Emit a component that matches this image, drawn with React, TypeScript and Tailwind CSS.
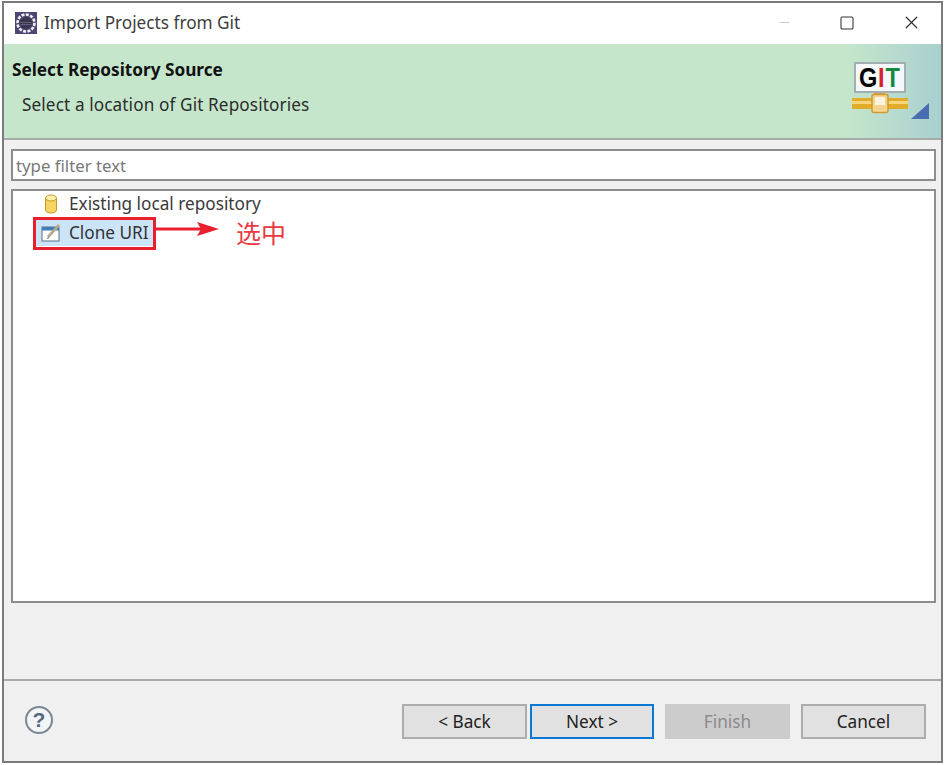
import { Minus, Square, X } from "lucide-react";

const FONT = "font-['Noto_Sans','Liberation_Sans',sans-serif]";

function EclipseIcon() {
  return (
    <svg width="22" height="22" viewBox="0 0 22 22" className="shrink-0">
      <rect x="0" y="0" width="22" height="22" fill="#4f4574" />
      <circle cx="11" cy="11" r="8.5" fill="none" stroke="#f2f2f4" strokeWidth="2.6" strokeDasharray="3 1.4" />
      <circle cx="11" cy="11" r="6" fill="#39374f" />
      <path d="M5.5 10.5h11M5.8 12.5h10.4" stroke="#6c6a85" strokeWidth="0.8" />
    </svg>
  );
}

function GitLogo() {
  return (
    <div className="flex flex-col items-center w-[56px]">
      <div className="w-[52px] h-[31px] bg-[#f4f8fa] border-2 border-[#a3adb3] flex items-center justify-center font-['Liberation_Sans',sans-serif] font-bold text-[28px] leading-none">
        <div className="flex scale-x-[0.84] tracking-[1px]">
          <span className="text-black">G</span>
          <span className="text-[#d8232a]">I</span>
          <span className="text-[#14893f]">T</span>
        </div>
      </div>
      <svg width="56" height="21" viewBox="0 0 56 21">
        <rect x="0" y="5" width="56" height="11" fill="#e2ac2b" />
        <rect x="0" y="8" width="56" height="3" fill="#f6d67a" />
        <rect x="22" y="0" width="11" height="3" fill="#d9a43a" />
        <rect x="20" y="1.5" width="16" height="18" rx="2" fill="#f3d58d" stroke="#cf9a30" strokeWidth="1.5" />
        <rect x="23" y="4" width="10" height="8" fill="#fbf3df" />
      </svg>
    </div>
  );
}

function CylinderIcon() {
  return (
    <svg width="14" height="20" viewBox="0 0 14 20" className="shrink-0">
      <path d="M1.5 4v12c0 4 11 4 11 0V4z" fill="#f5d560" stroke="#c79a2e" />
      <ellipse cx="7" cy="4" rx="5.5" ry="3" fill="#fbeea8" stroke="#c79a2e" />
    </svg>
  );
}

function CloneIcon() {
  return (
    <svg width="21" height="19" viewBox="0 0 21 19" className="shrink-0">
      <rect x="1" y="4" width="17" height="14" fill="#fdfdfd" stroke="#5b7183" />
      <rect x="1" y="4" width="17" height="3.5" fill="#3f7fb5" />
      <path d="M7 14L18 2" stroke="#b3a88c" strokeWidth="2.6" />
      <path d="M7 14l-1 2 2-1z" fill="#444" />
    </svg>
  );
}

function WizardButton({ label, className }: { label: string; className: string }) {
  return (
    <button className={`h-[35px] pt-[1px] text-[17.2px] leading-none flex items-center justify-center ${className}`}>
      {label}
    </button>
  );
}

export default function App() {
  return (
    <div className={`relative w-[945px] h-[765px] bg-white pt-[1px] pl-[2px] overflow-hidden ${FONT}`}>
      <div className="flex flex-col h-[762px] w-[941px] border-2 border-[#7b7b7b] bg-[#f0f0f0]">
        {/* title bar */}
        <div className="flex items-center h-[41px] bg-white shrink-0 pl-[11px] pb-[2px]">
          <EclipseIcon />
          <span className="ml-[7px] text-[17.2px] text-[#3c3c3c]">Import Projects from Git</span>
          <div className="ml-auto flex items-center text-[#333]">
            <Minus className="w-[15px] h-[15px] text-[#b5b5b5] mr-[47px]" strokeWidth={1.2} />
            <Square className="w-[16px] h-[16px] mr-[46px]" strokeWidth={1.6} absoluteStrokeWidth />
            <X className="w-[21px] h-[21px] mr-[19px]" strokeWidth={1.5} absoluteStrokeWidth />
          </div>
        </div>

        {/* banner */}
        <div className="relative flex h-[96px] shrink-0 bg-[linear-gradient(90deg,#c5e6cb_0%,#c5e6cb_90%,#a9d0d0_100%)] border-b-2 border-[#a8aca9]">
          <div className="flex-1 pl-[8px] pt-[14px]">
            <div className="text-[17.2px] font-bold text-[#111] leading-[24px]">Select Repository Source</div>
            <div className="text-[17.2px] text-[#2c2c2c] leading-[24px] tracking-[0.1px] pl-[10px] mt-[11px]">Select a location of Git Repositories</div>
          </div>
          <div className="pt-[18px] pr-[33px] flex">
            <GitLogo />
          </div>
          <svg width="18" height="16" viewBox="0 0 18 16" className="absolute right-[12px] bottom-[19px]">
            <path d="M0 16L18 0v16z" fill="#4a6cb0" />
          </svg>
        </div>

        {/* filter + tree */}
        <div className="flex-1 flex flex-col pl-[7px] pr-[5px] pt-[9px] pb-[76px] gap-[8px] border-b-2 border-[#a9a9a9] min-h-0">
          <div className="h-[32px] shrink-0 bg-white border-2 border-[#8d8d8d] flex items-center pl-[3px] pt-[2px] text-[16.8px] text-[#7a7a7a]">
            type filter text
          </div>
          <div className="flex-1 bg-white border-2 border-[#8d8d8d] relative">
            <div className="flex items-center h-[26px] pl-[31px] gap-[11px] text-[17.2px] text-[#3a3a3a]">
              <CylinderIcon />
              <span>Existing local repository</span>
            </div>
            <div className="flex items-center h-[27px] mt-[2px] ml-[22px] w-[120px] pl-[6px] gap-[7px] bg-[#cce4f7] text-[17.2px] text-[#333]">
              <CloneIcon />
              <span>Clone URI</span>
            </div>
          </div>
        </div>

        {/* footer */}
        <div className="h-[80px] shrink-0 flex items-start pt-[23px] pl-[20px] pr-[15px]">
          <svg width="30" height="30" viewBox="0 0 30 30" className="shrink-0 mt-[1px]">
            <circle cx="15" cy="15" r="13" fill="#f3f4f6" stroke="#7a8794" strokeWidth="2" />
            <text x="15" y="22" textAnchor="middle" fontSize="21" fontWeight="700" fill="#56687f" fontFamily="Liberation Sans">?</text>
          </svg>
          <div className="ml-auto flex items-center">
            <WizardButton label="< Back" className="w-[125px] bg-[#e1e1e1] border-2 border-[#adadad] text-[#222]" />
            <WizardButton label="Next >" className="w-[124px] ml-[3px] bg-[#e1e1e1] border-2 border-[#0a78d4] text-[#222]" />
            <WizardButton label="Finish" className="w-[125px] ml-[11px] bg-[#cccccc] text-[#8a8a8a]" />
            <WizardButton label="Cancel" className="w-[125px] ml-[11px] bg-[#e1e1e1] border-2 border-[#adadad] text-[#222]" />
          </div>
        </div>
      </div>

      {/* red annotation over the selected row */}
      <div className="absolute left-[33px] top-[217px] w-[123px] h-[33px] border-[3px] border-[#e8202e]" />
      <svg width="66" height="20" viewBox="0 0 66 20" className="absolute left-[155px] top-[219px]">
        <path d="M0 10H46" stroke="#e8202e" strokeWidth="3" />
        <path d="M42 3L64 10L42 17L46 10z" fill="#e8202e" />
      </svg>
      <span className="absolute left-[236px] top-[214px] text-[25px] leading-[36px] text-[#ea3a3f] font-['Noto_Sans_CJK_SC',sans-serif]">选中</span>
    </div>
  );
}
